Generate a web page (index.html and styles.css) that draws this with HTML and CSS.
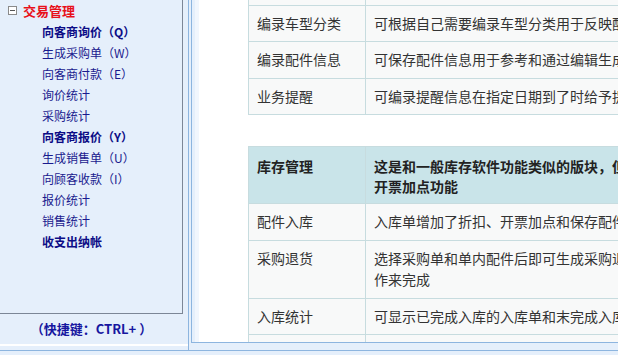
FILE: index.html
```html
<!DOCTYPE html>
<html lang="zh-CN">
<head>
  <meta charset="UTF-8">
  <meta name="viewport" content="width=device-width, initial-scale=1.0">
  <title>交易管理</title>
  <link rel="stylesheet" href="styles.css">
</head>
<body>
  <div class="shell">
    <div class="side-col">
      <div class="menu">
        <div class="group-title">
          <span class="toggle"></span>
          <span>交易管理</span>
        </div>
        <ul class="items">
          <li class="strong">向客商询价（Q）</li>
          <li>生成采购单（W）</li>
          <li>向客商付款（E）</li>
          <li>询价统计</li>
          <li>采购统计</li>
          <li class="strong">向客商报价（Y）</li>
          <li>生成销售单（U）</li>
          <li>向顾客收款（I）</li>
          <li>报价统计</li>
          <li>销售统计</li>
          <li class="strong">收支出纳帐</li>
        </ul>
      </div>
      <div class="shortcut">（快捷键：CTRL+ ）</div>
    </div>

    <div class="frame">
      <div class="frame-inner">
        <div class="content">
          <table class="feature first">
            <colgroup><col class="c1"><col class="c2"></colgroup>
            <tr>
              <td>编录客户资料</td>
              <td>可保存客户和供应商的联系资料</td>
            </tr>
            <tr>
              <td>编录车型分类</td>
              <td>可根据自己需要编录车型分类用于反映配件适用车型</td>
            </tr>
            <tr>
              <td>编录配件信息</td>
              <td>可保存配件信息用于参考和通过编辑生成配件资料</td>
            </tr>
            <tr>
              <td>业务提醒</td>
              <td>可编录提醒信息在指定日期到了时给予提示</td>
            </tr>
          </table>

          <table class="feature">
            <colgroup><col class="c1"><col class="c2"></colgroup>
            <tr class="head">
              <th>库存管理</th>
              <th>这是和一般库存软件功能类似的版块，但入库单增加了折扣和开票加点功能</th>
            </tr>
            <tr>
              <td>配件入库</td>
              <td>入库单增加了折扣、开票加点和保存配件单价的功能</td>
            </tr>
            <tr>
              <td>采购退货</td>
              <td>选择采购单和单内配件后即可生成采购退货单，不必再重新操作来完成</td>
            </tr>
            <tr>
              <td>入库统计</td>
              <td>可显示已完成入库的入库单和末完成入库的入库单</td>
            </tr>
            <tr>
              <td>配件出库</td>
              <td>出库单可以直接调用销售单生成</td>
            </tr>
          </table>
        </div>
      </div>
    </div>
  </div>
</body>
</html>
```

FILE: styles.css
```css
html, body {
  margin: 0;
  height: 100%;
  overflow: hidden;
}
body {
  font-family: "Noto Sans CJK SC", "Liberation Sans", sans-serif;
  background-color: #e5effb;
}
.shell {
  display: flex;
  height: 351px;
  box-sizing: border-box;
  border-bottom: 1px solid #8db5df;
}
.side-col {
  width: 188px;
  flex-shrink: 0;
  display: flex;
  flex-direction: column;
  margin-bottom: 4px;
  border-bottom: 2px solid #ffffff;
}
.menu {
  flex: 1;
  width: 182px;
  border-right: 1px solid #7c8696;
  border-bottom: 1px solid #7c8696;
}
.group-title {
  display: flex;
  align-items: center;
  height: 20px;
  padding-left: 8px;
  font-size: 13px;
  font-weight: bold;
  color: #e8101a;
}
.toggle {
  position: relative;
  width: 7px;
  height: 7px;
  border: 1px solid #8a8a8a;
  background-color: #ffffff;
  margin-right: 6px;
}
.toggle::after {
  content: "";
  position: absolute;
  left: 1px;
  right: 1px;
  top: 3px;
  height: 1px;
  background-color: #555555;
}
.items {
  list-style: none;
  margin: 1px 0 0 0;
  padding: 0 0 0 42px;
}
.items li {
  font-size: 12px;
  line-height: 21px;
  color: #1a1a8e;
  white-space: nowrap;
}
.items li.strong {
  font-weight: bold;
  color: #0c0c86;
}
.shortcut {
  width: 183px;
  height: 30px;
  line-height: 30px;
  text-align: center;
  font-size: 13px;
  font-weight: bold;
  color: #1616a0;
}
.frame {
  width: 620px;
  flex-shrink: 0;
  border-left: 1px solid #8db5df;
  padding: 0 0 7px 2px;
}
.frame-inner {
  height: 100%;
  box-sizing: border-box;
  border-left: 1px solid #8db5df;
  border-bottom: 1px solid #8db5df;
  padding-left: 3px;
}
.content {
  height: 100%;
  overflow: hidden;
  background-color: #ffffff;
  border-left: 4px solid #f1f6fd;
  padding-left: 49px;
}
.feature {
  border-collapse: collapse;
  table-layout: fixed;
  width: 517px;
  margin-top: 31px;
  font-size: 14px;
  color: #333333;
}
.feature.first {
  margin-top: -32px;
}
.feature .c1 {
  width: 117px;
}
.feature .c2 {
  width: 400px;
}
.feature td,
.feature th {
  border: 1px solid #c7dcdf;
  background-color: #f8f9f9;
  padding: 7px 8px;
  line-height: 21.5px;
  text-align: left;
  vertical-align: top;
  font-weight: normal;
}
.feature .head th {
  background-color: #c9e4e9;
  font-weight: bold;
  color: #222222;
  line-height: 20px;
  padding: 9px 8px 7px;
}
```
